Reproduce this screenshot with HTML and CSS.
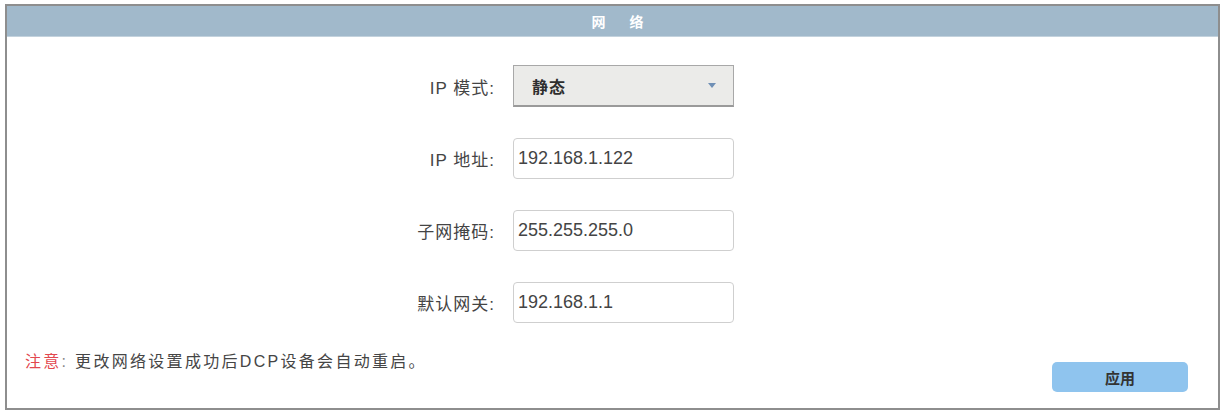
FILE: index.html
```html
<!DOCTYPE html>
<html lang="zh-CN">
<head>
<meta charset="utf-8">
<title>网络</title>
<link rel="stylesheet" href="styles.css">
</head>
<body>
<div class="panel">
  <div class="header"><span>网</span><span>络</span></div>
  <div class="body">
    <div class="form">
      <label class="label">IP 模式:</label>
      <div class="select"><span class="select-text">静态</span><span class="arrow"></span></div>
      <label class="label">IP 地址:</label>
      <div class="input">192.168.1.122</div>
      <label class="label">子网掩码:</label>
      <div class="input">255.255.255.0</div>
      <label class="label">默认网关:</label>
      <div class="input">192.168.1.1</div>
    </div>
    <div class="footer">
      <div class="note"><span class="warn">注意</span><span class="colon">:</span> 更改网络设置成功后DCP设备会自动重启。</div>
      <button class="apply">应用</button>
    </div>
  </div>
</div>
</body>
</html>
```
FILE: styles.css
```css
html, body {
  margin: 0;
  padding: 0;
  background: #ffffff;
}
body {
  font-family: "Liberation Sans", "Noto Sans CJK SC", sans-serif;
  color: #3a3a3a;
}
.panel {
  margin: 4px 3px 2px 5px;
  height: 402px;
  border: 2px solid #8e8e8e;
  display: flex;
  flex-direction: column;
  background: #fff;
}
.header {
  height: 30px;
  background: #a1b9cb;
  border-bottom: 1px solid #c3d2dd;
  display: flex;
  justify-content: center;
  align-items: center;
  gap: 24px;
  padding-left: 10px;
  color: #ffffff;
  font-weight: bold;
  font-size: 14px;
}
.body {
  flex: 1;
  display: flex;
  flex-direction: column;
  padding: 28px 0 16px 0;
}
.form {
  display: grid;
  grid-template-columns: 488px 221px;
  column-gap: 18px;
  row-gap: 31px;
  align-items: center;
}
.label {
  text-align: right;
  font-size: 17px;
  letter-spacing: 1px;
  color: #444;
}
.select {
  box-sizing: border-box;
  height: 42px;
  background: #ebebe9;
  border: 1px solid #a8a8a8;
  border-bottom: 2px solid #9a9a9a;
  display: flex;
  align-items: center;
  justify-content: space-between;
  padding: 0 17px 0 18px;
}
.select-text {
  font-size: 16px;
  font-weight: bold;
  color: #2e2e2e;
  letter-spacing: 1px;
}
.arrow {
  width: 0;
  height: 0;
  border-left: 4px solid transparent;
  border-right: 4px solid transparent;
  border-top: 5px solid #6f8fb5;
}
.input {
  height: 41px;
  box-sizing: border-box;
  border: 1px solid #cfcfcf;
  border-radius: 4px;
  display: flex;
  align-items: center;
  padding-left: 4px;
  font-size: 18px;
  color: #444;
}
.footer {
  margin-top: 29px;
  display: flex;
  justify-content: space-between;
  align-items: flex-start;
  padding: 0 30px 0 18px;
}
.note {
  font-size: 16px;
  line-height: 20px;
  letter-spacing: 2.3px;
  color: #454545;
}
.warn {
  color: #e2474f;
}
.colon {
  color: #888;
}
.apply {
  margin-top: 10px;
  width: 136px;
  height: 30px;
  border: none;
  border-radius: 5px;
  background: #8fc4ee;
  font-family: "Liberation Sans", "Noto Sans CJK SC", sans-serif;
  font-size: 15px;
  font-weight: bold;
  color: #333;
  padding: 0;
}
```
